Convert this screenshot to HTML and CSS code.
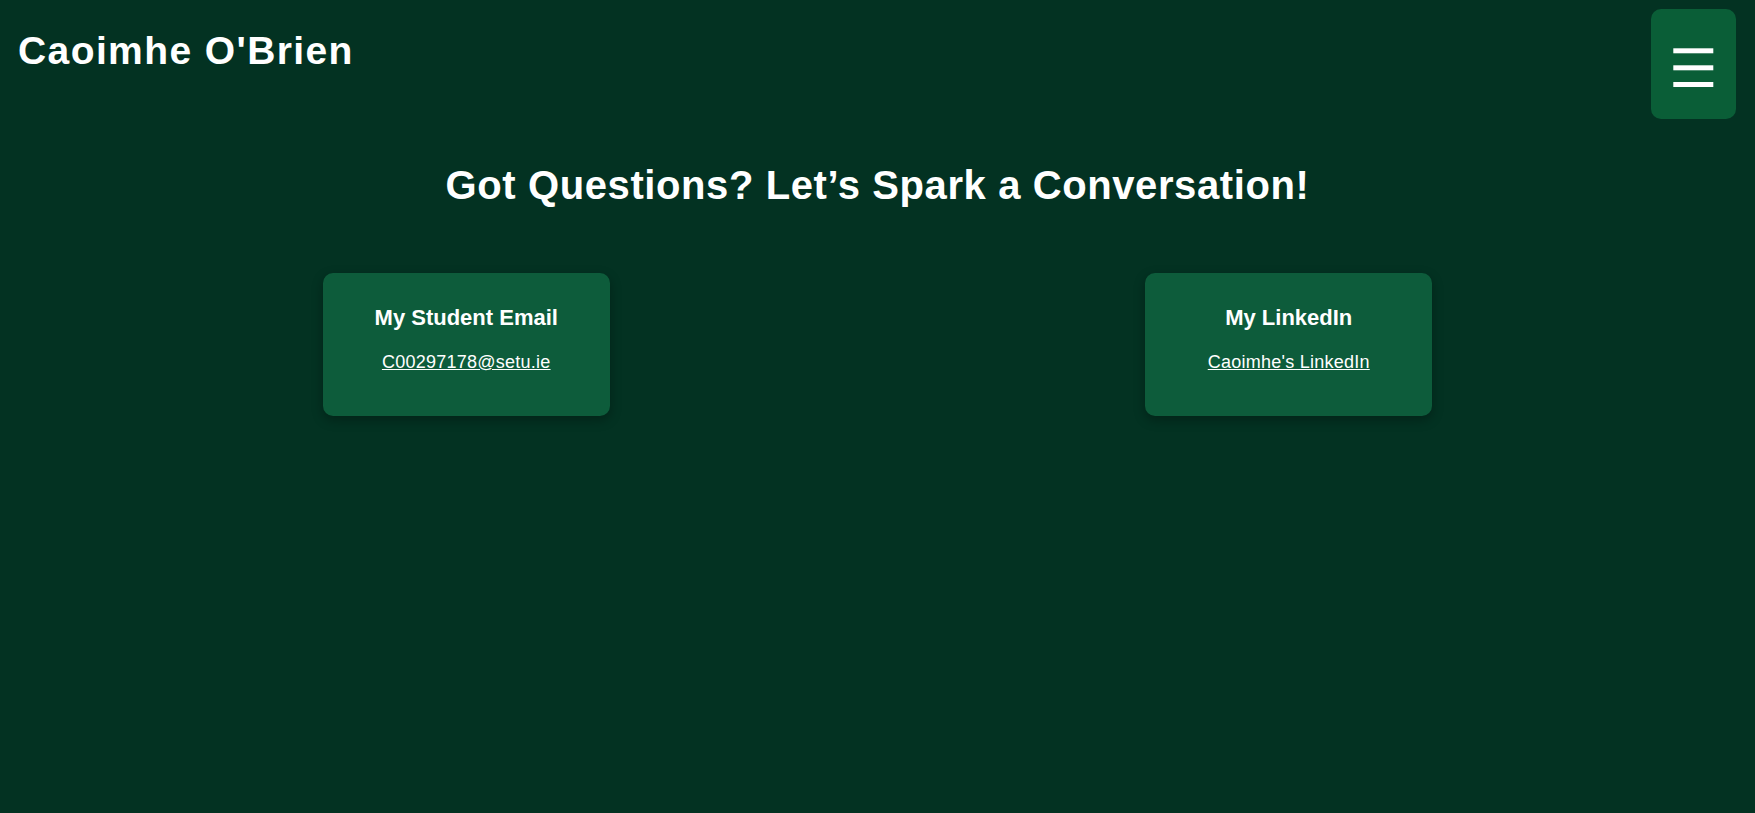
FILE: index.html
```
<!DOCTYPE html>
<html lang="en">
<head>
<meta charset="utf-8">
<title>Contact - Caoimhe O'Brien</title>
<link rel="stylesheet" href="styles.css">
</head>
<body>
<header class="site-header">
  <div class="site-name">Caoimhe O'Brien</div>
  <button class="menu-btn" aria-label="Menu">
    <svg class="menu-icon" width="85" height="110" viewBox="0 0 85 110">
      <rect x="22.3" y="39.3" width="40" height="5" fill="#ffffff"/>
      <rect x="22.3" y="56.3" width="40" height="5" fill="#ffffff"/>
      <rect x="22.3" y="73" width="40" height="5" fill="#ffffff"/>
    </svg>
  </button>
</header>
<main>
  <h1 class="page-title">Got Questions? Let’s Spark a Conversation!</h1>
  <section class="cards">
    <div class="card">
      <h3 class="card-title">My Student Email</h3>
      <a class="card-link" href="#">C00297178@setu.ie</a>
    </div>
    <div class="card">
      <h3 class="card-title">My LinkedIn</h3>
      <a class="card-link" href="#">Caoimhe's LinkedIn</a>
    </div>
  </section>
</main>
</body>
</html>
```
FILE: styles.css
```
html, body {
  margin: 0;
  padding: 0;
}
body {
  background: #033222;
  color: #ffffff;
  font-family: "Liberation Sans", Arial, sans-serif;
  min-height: 813px;
}
.site-header {
  display: flex;
  justify-content: space-between;
  align-items: flex-start;
  padding: 9px 19px 0 18px;
}
.site-name {
  margin-top: 22px;
  font-size: 39px;
  line-height: 1;
  font-weight: bold;
  letter-spacing: 1.4px;
}
.menu-btn {
  width: 85px;
  height: 110px;
  padding: 0;
  border: none;
  border-radius: 10px;
  background: #0a5e37;
  display: block;
  cursor: pointer;
}
.menu-icon {
  display: block;
}
.page-title {
  margin: 46px 0 0;
  text-align: center;
  font-size: 40px;
  line-height: 1;
  font-weight: bold;
  letter-spacing: 0.6px;
}
.cards {
  display: flex;
  justify-content: space-around;
  padding: 0 55px;
  margin-top: 68px;
}
.card {
  width: 287px;
  height: 143px;
  box-sizing: border-box;
  padding: 34px 10px 0;
  background: #0d5c3b;
  border-radius: 10px;
  box-shadow: 0 4px 12px rgba(0, 0, 0, 0.3);
  text-align: center;
}
.card-title {
  margin: 0 0 24px;
  font-size: 22px;
  line-height: 1;
  font-weight: bold;
}
.card-link {
  display: inline-block;
  font-size: 18px;
  line-height: 1;
  color: #ffffff;
  text-decoration: underline;
  letter-spacing: 0.25px;
}
```
